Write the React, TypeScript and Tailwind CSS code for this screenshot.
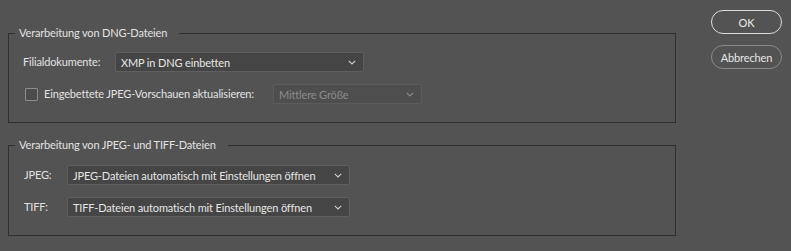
import React from "react";

const font = { fontFamily: 'Lato, "Noto Sans", Arial, sans-serif' };

function Chevron({ disabled }: { disabled?: boolean }) {
  return (
    <svg
      width="8"
      height="5"
      viewBox="0 0 8 5"
      className={disabled ? "text-[#8a8a8a]" : "text-[#cfcfcf]"}
      fill="none"
      stroke="currentColor"
      strokeWidth="1.1"
    >
      <path d="M0.8 0.8 L4 4 L7.2 0.8" />
    </svg>
  );
}

function Select({
  value,
  width,
  disabled,
}: {
  value: string;
  width: string;
  disabled?: boolean;
}) {
  return (
    <div
      className={`${width} shrink-0 h-[20px] flex items-center justify-between pl-[5px] pr-[7px] border rounded-[2px] ${
        disabled
          ? "bg-[#4e4e4e] border-[#5c5c5c] text-[#8c8c8c]"
          : "bg-[#454545] border-[#5f5f5f] text-[#e6e6e6]"
      }`}
    >
      <span className="whitespace-nowrap leading-none">{value}</span>
      <Chevron disabled={disabled} />
    </div>
  );
}

function Group({
  title,
  children,
}: {
  title: string;
  children: React.ReactNode;
}) {
  return (
    <fieldset className="w-[668px] border border-[#2f2f2f] pb-[18px]">
      <legend className="ml-[6px] pl-[4px] pr-[12px] h-[16px] leading-[16px] text-[#e2e2e2] whitespace-nowrap">
        {title}
      </legend>
      {children}
    </fieldset>
  );
}

export default function App() {
  return (
    <div
      className="w-[791px] h-[251px] bg-[#535353] text-[11px] tracking-[-0.15px] text-[#e2e2e2] flex"
      style={font}
    >
      {/* left: option groups */}
      <div className="pl-[8px] pt-[25px] flex flex-col gap-[14px]">
        <Group title="Verarbeitung von DNG-Dateien">
          <div className="mt-[11px] flex flex-col gap-[12px]">
            <div className="flex items-center h-[20px]">
              <span className="ml-[14px] w-[92px] whitespace-nowrap">Filialdokumente:</span>
              <Select value="XMP in DNG einbetten" width="w-[249px]" />
            </div>
            <div className="flex items-center h-[20px]">
              <span className="ml-[16px] w-[13px] h-[13px] border border-[#8d8d8d] bg-[#4c4c4c] rounded-[1px]" />
              <span className="ml-[6px] w-[229px] whitespace-nowrap">
                Eingebettete JPEG-Vorschauen aktualisieren:
              </span>
              <Select value="Mittlere Größe" width="w-[149px]" disabled />
            </div>
          </div>
        </Group>

        <Group title="Verarbeitung von JPEG- und TIFF-Dateien">
          <div className="mt-[12px] flex flex-col gap-[12px]">
            <div className="flex items-center h-[20px]">
              <span className="ml-[15px] w-[43px]">JPEG:</span>
              <Select
                value="JPEG-Dateien automatisch mit Einstellungen öffnen"
                width="w-[283px]"
              />
            </div>
            <div className="flex items-center h-[20px]">
              <span className="ml-[15px] w-[43px]">TIFF:</span>
              <Select
                value="TIFF-Dateien automatisch mit Einstellungen öffnen"
                width="w-[283px]"
              />
            </div>
          </div>
        </Group>
      </div>

      {/* right: dialog buttons */}
      <div className="ml-[35px] pt-[10px] flex flex-col gap-[11px]">
        <button className="w-[71px] h-[24px] rounded-full border-[1.5px] border-[#dcdcdc] text-[#ececec] leading-none">
          OK
        </button>
        <button className="w-[71px] h-[24px] rounded-full border border-[#8a8a8a] text-[#e6e6e6] leading-none">
          Abbrechen
        </button>
      </div>
    </div>
  );
}
